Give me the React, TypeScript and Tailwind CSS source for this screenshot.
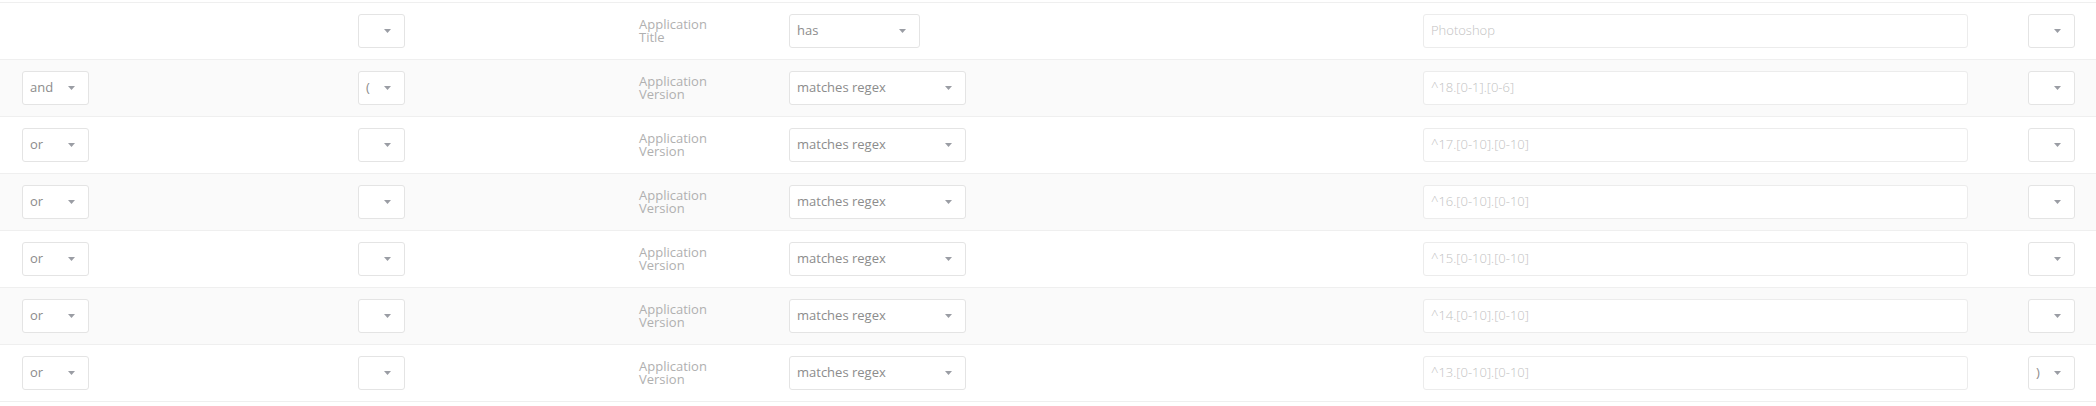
import React from 'react';

type Rule = {
  join?: string;
  open?: string;
  field: string;
  op: string;
  value: string;
  close?: string;
};

const rules: Rule[] = [
  { field: 'Title', op: 'has', value: 'Photoshop' },
  { join: 'and', open: '(', field: 'Version', op: 'matches regex', value: '^18.[0-1].[0-6]' },
  { join: 'or', field: 'Version', op: 'matches regex', value: '^17.[0-10].[0-10]' },
  { join: 'or', field: 'Version', op: 'matches regex', value: '^16.[0-10].[0-10]' },
  { join: 'or', field: 'Version', op: 'matches regex', value: '^15.[0-10].[0-10]' },
  { join: 'or', field: 'Version', op: 'matches regex', value: '^14.[0-10].[0-10]' },
  { join: 'or', field: 'Version', op: 'matches regex', value: '^13.[0-10].[0-10]', close: ')' },
];

const Caret = () => (
  <svg width="7" height="4" viewBox="0 0 7 4" className="shrink-0">
    <path d="M0 0h7L3.5 4z" fill="#9a9da4" />
  </svg>
);

const Select: React.FC<{ label?: string; className: string }> = ({ label, className }) => (
  <div
    className={`flex h-[34px] items-center justify-between rounded-[3px] border border-[#e4e4e4] bg-white pl-[7px] pr-[13px] text-[13px] text-[#8c8c8c] ${className}`}
  >
    <span>{label}</span>
    <Caret />
  </div>
);

export default function App() {
  return (
    <div className="bg-white pt-[2px]" style={{ fontFamily: '"Open Sans", sans-serif' }}>
      <div className="border-t border-[#efefef]">
        {rules.map((r, i) => (
          <div
            key={i}
            className={`grid h-[57px] grid-cols-[336px_281px_150px_634px_605px_47px] items-center border-b border-[#efefef] pl-[22px] ${
              i % 2 === 1 ? 'bg-[#fafafa]' : 'bg-white'
            }`}
          >
            <div>{r.join && <Select label={r.join} className="w-[67px]" />}</div>
            <div>
              <Select label={r.open} className="w-[47px]" />
            </div>
            <div className="text-[13px] leading-[13.5px] text-[#b0b0b0]">
              <div>Application</div>
              <div>{r.field}</div>
            </div>
            <div>
              <Select label={r.op} className={r.op === 'has' ? 'w-[131px]' : 'w-[177px]'} />
            </div>
            <div>
              <div className="flex h-[34px] w-[545px] items-center rounded-[3px] border border-[#ececec] bg-white pl-[7px] text-[13px] font-light text-[#c2c2c2]">
                {r.value}
              </div>
            </div>
            <div>
              <Select label={r.close} className="w-[47px]" />
            </div>
          </div>
        ))}
      </div>
    </div>
  );
}
